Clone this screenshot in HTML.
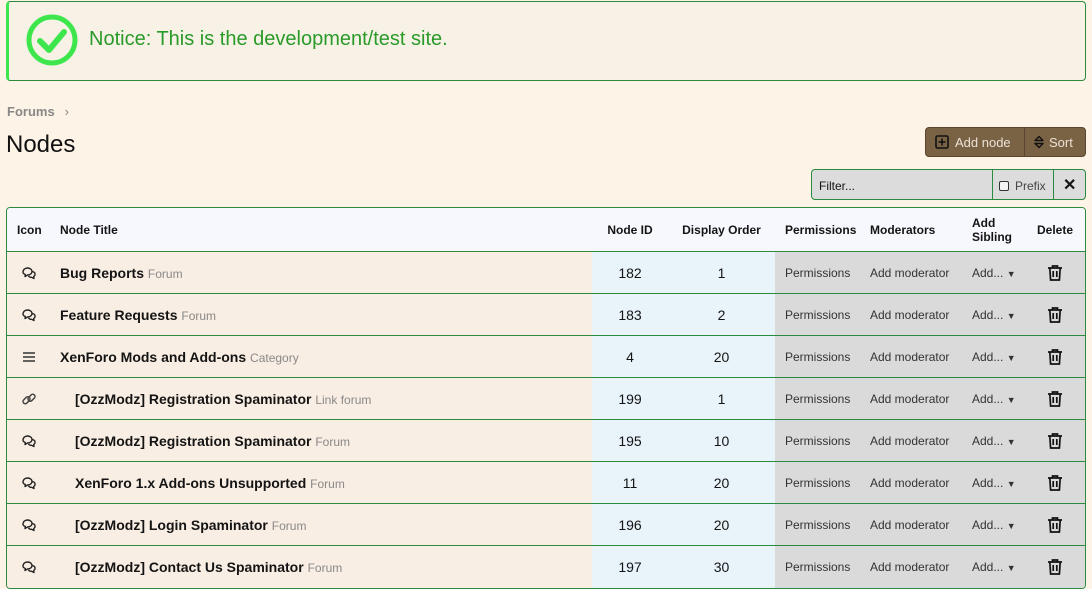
<!DOCTYPE html>
<html><head><meta charset="utf-8"><style>
*{box-sizing:border-box;margin:0;padding:0}
body{width:1092px;height:589px;overflow:hidden;background:#fdf3e6;font-family:"Liberation Sans",sans-serif;color:#141414;position:relative}
.notice{position:absolute;left:6px;top:1px;width:1080px;height:80px;border:1px solid #2a8a3e;border-left:3px solid #3ee64e;border-radius:4px;background:#f8f2e6}
.notice svg{position:absolute;left:16px;top:11px}
.notice span{position:absolute;left:80px;top:26px;font-size:20px;color:#2a9a2a}
.crumb{position:absolute;left:7px;top:104px;font-size:13px;font-weight:bold;color:#888}
.crumb i{font-style:normal;font-weight:normal;margin-left:10px}
h1{position:absolute;left:6px;top:131px;font-size:24px;font-weight:normal;color:#111}
.btns{position:absolute;left:925px;top:127px;width:161px;height:30px;background:#7a6245;border:1px solid #5a4630;border-radius:4px;font-size:13px;color:#ece3d6}
.btns .b1{position:absolute;left:9px;top:7px}
.btns .sep{position:absolute;left:98px;top:0;width:1px;height:28px;background:#5a4630}
.btns .b2{position:absolute;left:108px;top:7px}
.filter{position:absolute;left:811px;top:169px;width:275px;height:31px;border:1px solid #2a8a3e;border-radius:4px;background:#dcdcdc;font-size:12px}
.filter .f{position:absolute;left:7px;top:9px}
.filter .s1{position:absolute;left:180px;top:0;width:1px;height:29px;background:#2a8a3e}
.filter .p{position:absolute;left:187px;top:9px;color:#444}
.filter .p b{display:inline-block;width:10px;height:10px;border:1px solid #333;border-radius:2px;margin-right:6px;vertical-align:-1px;background:#f4f4f4}
.filter .s2{position:absolute;left:241px;top:0;width:1px;height:29px;background:#2a8a3e}
.filter .x{position:absolute;left:251px;top:5px;font-size:16px;font-weight:bold}
table{position:absolute;left:6px;top:207px;width:1080px;table-layout:fixed;border-collapse:separate;border-spacing:0;border:1px solid #2a8a3e;border-radius:4px;overflow:hidden;font-size:12px}
th{background:#f7f8fd;height:44px;font-size:12px;text-align:left;font-weight:bold;border-bottom:1px solid #2a8a3e;padding:0 10px}
td{height:42px;border-bottom:1px solid #2a8a3e;padding:0 10px;background:#f9eee3}
tr:last-child td{border-bottom:none}
td.t{font-size:14px;font-weight:bold;white-space:nowrap}
td.t small{font-size:12px;font-weight:normal;color:#888}
td.n{background:#e8f3fa;text-align:center;font-size:14px}
td.g{background:#dadada;color:#333}
td.ic{padding-left:14px}
td svg{vertical-align:middle}
.ind{padding-left:15px}
</style></head><body>
<div class="notice"><svg width="54" height="54" viewBox="0 0 54 54"><circle cx="27" cy="27" r="23" fill="none" stroke="#3ee64e" stroke-width="5"/><path d="M15 28 L24 37 L39 19" fill="none" stroke="#3ee64e" stroke-width="6" stroke-linecap="round" stroke-linejoin="round"/></svg><span>Notice: This is the development/test site.</span></div>
<div class="crumb">Forums<i>›</i></div>
<h1>Nodes</h1>
<div class="btns"><span class="b1"><svg width="14" height="14" viewBox="0 0 14 14" style="vertical-align:-2px;margin-right:6px"><rect x="1" y="1" width="12" height="12" rx="1.5" fill="none" stroke="#111" stroke-width="1.6"/><path d="M7 3.5v7M3.5 7h7" stroke="#111" stroke-width="1.6"/></svg>Add node</span><div class="sep"></div><span class="b2"><svg width="10" height="14" viewBox="0 0 10 14" style="vertical-align:-2px;margin-right:5px"><path d="M1 5.5 5 1.5 9 5.5ZM1 8.5 5 12.5 9 8.5Z" fill="none" stroke="#111" stroke-width="1.4" stroke-linejoin="round"/></svg>Sort</span></div>
<div class="filter"><span class="f">Filter...</span><div class="s1"></div><span class="p"><b></b>Prefix</span><div class="s2"></div><span class="x">✕</span></div>
<table>
<colgroup><col style="width:43px"><col style="width:542px"><col style="width:76px"><col style="width:107px"><col style="width:85px"><col style="width:102px"><col style="width:65px"><col style="width:58px"></colgroup>
<tr><th>Icon</th><th>Node Title</th><th style="text-align:center">Node ID</th><th style="text-align:center">Display Order</th><th>Permissions</th><th>Moderators</th><th>Add<br>Sibling</th><th>Delete</th></tr>
</table>
<script>
var F='<svg width="16" height="14" viewBox="0 0 16 14"><path d="M2 6.5C2 3.5 4 2 6.5 2S11 3.5 11 5.5 9 9 6.5 9L4 10.5 4.3 8.5C2.8 7.8 2 7 2 6.5Z" fill="none" stroke="#222" stroke-width="1.4" stroke-linejoin="round"/><path d="M11.5 5.5C13.3 6 14.3 7.2 14 8.8 13.8 9.7 13.3 10.2 12.7 10.6L13 12.5 10.5 11.3C9.2 11.4 8 10.8 7.5 9.8" fill="none" stroke="#222" stroke-width="1.4" stroke-linejoin="round"/></svg>';
var C='<svg width="16" height="14" viewBox="0 0 16 14"><path d="M2 3h12M2 7h12M2 11h12" stroke="#333" stroke-width="1.4"/></svg>';
var L='<svg width="16" height="16" viewBox="0 0 16 16"><g fill="none" stroke="#444" stroke-width="1.5"><rect x="1.5" y="7" width="8" height="4.5" rx="2.25" transform="rotate(-45 5.5 9.25)"/><rect x="6.5" y="4.5" width="8" height="4.5" rx="2.25" transform="rotate(-45 10.5 6.75)"/></g></svg>';
var T='<svg width="18" height="18" viewBox="0 0 18 18"><g fill="none" stroke="#111" stroke-width="1.7"><path d="M2 4h14M6.5 4V2h5v2"/><path d="M3.8 4l.8 12h8.8l.8-12"/><path d="M7.2 7v6M10.8 7v6"/></g></svg>';
var rows=[[F,'Bug Reports','Forum',182,1,0],[F,'Feature Requests','Forum',183,2,0],[C,'XenForo Mods and Add-ons','Category',4,20,0],[L,'[OzzModz] Registration Spaminator','Link forum',199,1,1],[F,'[OzzModz] Registration Spaminator','Forum',195,10,1],[F,'XenForo 1.x Add-ons Unsupported','Forum',11,20,1],[F,'[OzzModz] Login Spaminator','Forum',196,20,1],[F,'[OzzModz] Contact Us Spaminator','Forum',197,30,1]];
var h='';rows.forEach(function(r){h+='<tr><td class="ic">'+r[0]+'</td><td class="t"><span'+(r[5]?' class="ind"':'')+'>'+r[1]+'</span> <small>'+r[2]+'</small></td><td class="n">'+r[3]+'</td><td class="n">'+r[4]+'</td><td class="g">Permissions</td><td class="g">Add moderator</td><td class="g">Add... <span style="font-size:9px">▼</span></td><td class="g" style="padding-left:19px">'+T+'</td></tr>';});
document.querySelector('table').insertAdjacentHTML('beforeend',h);
</script>
</body></html>
